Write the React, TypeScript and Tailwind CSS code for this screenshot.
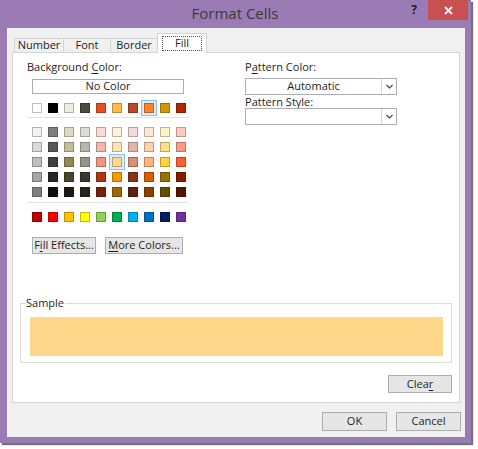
import React from "react";

const themeTop = ["#ffffff", "#000000", "#eeece1", "#4b4b3f", "#e84c22", "#ffbd47", "#b64926", "#ff8427", "#cc9900", "#b22600"];
const tints = [
  ["#f2f2f2", "#7f7f7f", "#ddd9c3", "#dcdcd6", "#fadbd3", "#fff1da", "#f2dad2", "#ffe6d4", "#fff2c4", "#ffc9bc"],
  ["#d9d9d9", "#595959", "#c4bd97", "#b7b7ad", "#f6b8a7", "#ffe5b5", "#e6b5a5", "#ffceaa", "#ffe083", "#ff9a80"],
  ["#bfbfbf", "#404040", "#948a54", "#959585", "#f1947a", "#ffd78e", "#d98f77", "#ffb57e", "#ffd23f", "#ff5e33"],
  ["#a6a6a6", "#262626", "#4a452a", "#38382f", "#b2350f", "#f39c00", "#883619", "#d95f00", "#997300", "#851c00"],
  ["#7f7f7f", "#0d0d0d", "#1d1b11", "#25251f", "#77230a", "#a26800", "#5b2411", "#913f00", "#664d00", "#591300"],
];
const standard = ["#c00000", "#ff0000", "#ffc000", "#ffff00", "#92d050", "#00b050", "#00b0f0", "#0070c0", "#002060", "#7030a0"];

function Swatch({ color, selected }: { color: string; selected?: boolean }) {
  return (
    <div className="w-[16px] h-[10px] flex justify-center">
      <div
        className={
          "w-[10px] h-[10px] border border-black/25 " +
          (selected ? "shadow-[0_0_0_2px_#dcecfc,0_0_0_3px_#8cc0ec]" : "")
        }
        style={{ backgroundColor: color }}
      />
    </div>
  );
}

function SwatchRow({ colors, sel }: { colors: string[]; sel?: number }) {
  return (
    <div className="flex">
      {colors.map((c, i) => (
        <Swatch key={i} color={c} selected={i === sel} />
      ))}
    </div>
  );
}

function Btn({ children, className = "" }: { children: React.ReactNode; className?: string }) {
  return (
    <div
      className={
        "flex items-center justify-center bg-[#e6e6e6] border border-[#adadad] text-[11px] text-[#1e1e1e] " +
        className
      }
    >
      {children}
    </div>
  );
}

function Combo({ value }: { value?: string }) {
  return (
    <div className="w-[152px] h-[17px] flex bg-white border border-[#abadb3]">
      <div className="flex-1 flex items-center justify-center text-[11px] text-[#1e1e1e]">{value}</div>
      <div className="w-[15px] border-l border-[#d4d4d4] flex items-center justify-center">
        <svg width="7" height="5" viewBox="0 0 7 5">
          <path d="M0.5 1 L3.5 4 L6.5 1" fill="none" stroke="#444" strokeWidth="1.2" />
        </svg>
      </div>
    </div>
  );
}

export default function App() {
  return (
    <div className="w-[478px] h-[449px] bg-white font-['Open_Sans',sans-serif] text-[#1e1e1e]">
      <div className="w-[471px] h-[443px] bg-[#9a7bb4] shadow-[2px_2px_1px_rgba(0,0,0,0.55)] flex flex-col">
        {/* Title bar */}
        <div className="h-[28px] flex items-start">
          <div className="flex-1 h-[27px] flex items-center justify-center pl-[66px] text-[15px] text-[#3a3a3a]">
            Format Cells
          </div>
          <div className="w-[20px] h-[20px] flex items-center justify-center text-[12px] font-bold text-[#222] mr-[4px]">
            ?
          </div>
          <div className="w-[40px] h-[20px] bg-[#c75050] flex items-center justify-center mr-[3px]">
            <svg width="9" height="9" viewBox="0 0 9 9">
              <path d="M1 1 L8 8 M8 1 L1 8" stroke="#fff" strokeWidth="1.8" />
            </svg>
          </div>
        </div>

        {/* Client area */}
        <div className="mx-[7px] w-[458px] h-[409px] bg-[#f0f0f0] flex flex-col px-[5px]">
          {/* Tabs */}
          <div className="h-[24px] flex items-end pl-[2px]">
            <div className="w-[50px] h-[14px] border border-b-0 border-[#d4d4d4] flex items-center justify-center text-[11px]">
              Number
            </div>
            <div className="-ml-px w-[48px] h-[14px] border border-b-0 border-[#d4d4d4] flex items-center justify-center text-[11px]">
              Font
            </div>
            <div className="-ml-px w-[48px] h-[14px] border border-b-0 border-[#d4d4d4] flex items-center justify-center text-[11px]">
              Border
            </div>
            <div className="-ml-px relative z-10 -mb-px w-[50px] h-[20px] bg-white border border-b-0 border-[#d4d4d4] flex items-center justify-center">
              <div className="w-[40px] h-[15px] border border-dotted border-[#555] flex items-center justify-center text-[11px]">
                Fill
              </div>
            </div>
          </div>

          {/* Panel */}
          <div className="w-[448px] h-[351px] bg-white border border-[#d4d4d4] flex flex-col">
            <div className="flex">
              {/* Left column */}
              <div className="w-[232px] pl-[14px] pt-[6px] flex flex-col">
                <div className="h-[16px] leading-[16px] text-[11px]">
                  Background <u className="underline-offset-2">C</u>olor:
                </div>
                <div className="pl-[5px] flex flex-col">
                  <div className="mt-[4px] w-[152px] h-[15px] border border-[#acacac] flex items-center justify-center text-[11px]">
                    No Color
                  </div>
                  <div className="mt-[9px] -ml-[3px]">
                    <SwatchRow colors={themeTop} sel={7} />
                  </div>
                  <div className="mt-[4px] -ml-[5px] w-[161px] h-px bg-[#e3e3e3]" />
                  <div className="mt-[9px] -ml-[3px] flex flex-col gap-[5px]">
                    {tints.map((row, i) => (
                      <SwatchRow key={i} colors={row} sel={i === 2 ? 5 : undefined} />
                    ))}
                  </div>
                  <div className="mt-[5px] -ml-[5px] w-[161px] h-px bg-[#e3e3e3]" />
                  <div className="mt-[9px] -ml-[3px]">
                    <SwatchRow colors={standard} />
                  </div>
                  <div className="mt-[15px] flex gap-[9px]">
                    <Btn className="w-[64px] h-[17px]">
                      F<u className="underline-offset-2">i</u>ll Effects...
                    </Btn>
                    <Btn className="w-[78px] h-[17px]">
                      <u className="underline-offset-2">M</u>ore Colors...
                    </Btn>
                  </div>
                </div>
              </div>

              {/* Right column */}
              <div className="pt-[6px] flex flex-col">
                <div className="h-[16px] leading-[16px] text-[11px]">
                  P<u className="underline-offset-2">a</u>ttern Color:
                </div>
                <div className="mt-[3px]">
                  <Combo value="Automatic" />
                </div>
                <div className="h-[13px] leading-[13px] text-[11px]">
                  <u className="underline-offset-2">P</u>attern Style:
                </div>
                <div>
                  <Combo />
                </div>
              </div>
            </div>

            {/* Sample */}
            <div className="mt-[49px] mx-[7px] h-[60px] relative border border-[#dcdcdc] flex flex-col">
              <span className="absolute left-[5px] -top-[9px] bg-white text-[11px] leading-[16px] pr-[1px]">
                Sample
              </span>
              <div className="mt-[13px] ml-[9px] mr-[8px] h-[39px] bg-[#ffd78a]" />
            </div>

            <div className="mt-[12px] mr-[7px] flex justify-end">
              <Btn className="w-[64px] h-[18px]">
                Clea<u className="underline-offset-2">r</u>
              </Btn>
            </div>
          </div>

          {/* Dialog buttons */}
          <div className="mt-[9px] flex justify-end gap-[9px] -mr-[1px]">
            <Btn className="w-[65px] h-[19px] border-[#3c9ae8]">OK</Btn>
            <Btn className="w-[65px] h-[19px]">Cancel</Btn>
          </div>
        </div>
      </div>
    </div>
  );
}
